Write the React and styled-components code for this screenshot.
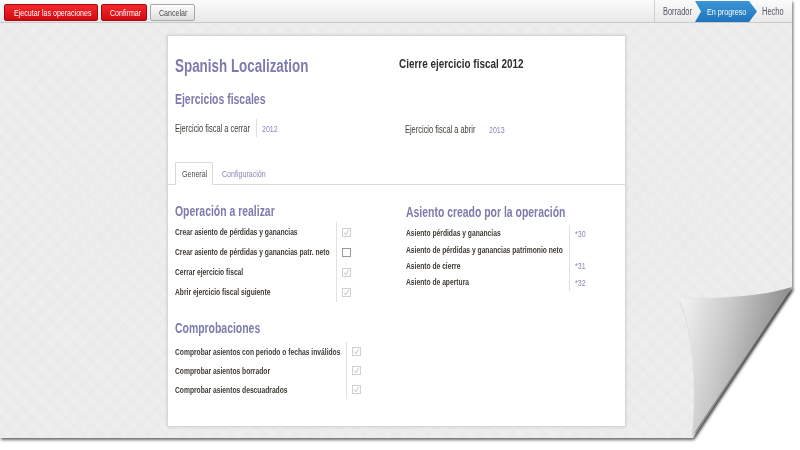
import React from "react";
import styled, { createGlobalStyle } from "styled-components";

const sans = `"Liberation Sans", Arial, sans-serif`;

const GlobalStyle = createGlobalStyle`
  html, body {
    margin: 0;
    padding: 0;
    background: #ffffff;
    font-family: ${sans};
  }
`;

// the screenshot is squeezed horizontally, so every text run is too
const Squeeze = styled.span`
  display: inline-block;
  white-space: nowrap;
  transform: scaleX(0.745);
  transform-origin: 0 50%;
`;

const CheckBox = ({ checked }) => (
  <Box $checked={checked}>
    {checked && (
      <svg width="7" height="7" viewBox="0 0 7 7">
        <path d="M1.2 3.4 L2.9 5.8 L5.9 0.6" fill="none" stroke="#b8b8b8" strokeWidth="0.8" />
      </svg>
    )}
  </Box>
);

const operaciones = [
  ["Crear asiento de pérdidas y ganancias", true],
  ["Crear asiento de pérdidas y ganancias patr. neto", false],
  ["Cerrar ejercicio fiscal", true],
  ["Abrir ejercicio fiscal siguiente", true],
];

const comprobaciones = [
  "Comprobar asientos con periodo o fechas inválidos",
  "Comprobar asientos borrador",
  "Comprobar asientos descuadrados",
];

const asientos = [
  ["Asiento pérdidas y ganancias", "*30"],
  ["Asiento de pérdidas y ganancias patrimonio neto", ""],
  ["Asiento de cierre", "*31"],
  ["Asiento de apertura", "*32"],
];

const App = () => {
  return (
    <Stage>
      <GlobalStyle />
      <PaperShadow>
        <Paper>
          <TopBar>
            <Buttons>
              <RedButton $w={94} $pad={9}>
                <Squeeze>Ejecutar las operaciones</Squeeze>
              </RedButton>
              <RedButton $w={46} $pad={8}>
                <Squeeze>Confirmar</Squeeze>
              </RedButton>
              <GrayButton $w={45} $pad={8}>
                <Squeeze>Cancelar</Squeeze>
              </GrayButton>
            </Buttons>
            <StatusBar>
              <Step $w={40} $pad={8}>
                <Squeeze>Borrador</Squeeze>
              </Step>
              <ActiveStep>
                <Squeeze>En progreso</Squeeze>
              </ActiveStep>
              <Step $w={35} $pad={5}>
                <Squeeze>Hecho</Squeeze>
              </Step>
            </StatusBar>
          </TopBar>

          <SheetArea>
            <Sheet>
              <Header>
                <Title>
                  <Squeeze>Spanish Localization</Squeeze>
                </Title>
                <Subtitle>
                  <Squeeze>Cierre ejercicio fiscal 2012</Squeeze>
                </Subtitle>
                <Heading>
                  <Squeeze>Ejercicios fiscales</Squeeze>
                </Heading>
                <span />
                <Field>
                  <FieldLabel $w={81} $line>
                    <Squeeze>Ejercicio fiscal a cerrar</Squeeze>
                  </FieldLabel>
                  <Value>
                    <Squeeze>2012</Squeeze>
                  </Value>
                </Field>
                <Field $right>
                  <FieldLabel $w={78}>
                    <Squeeze>Ejercicio fiscal a abrir</Squeeze>
                  </FieldLabel>
                  <Value>
                    <Squeeze>2013</Squeeze>
                  </Value>
                </Field>
              </Header>

              <Tabs>
                <Tab $active $w={38}>
                  <Squeeze>General</Squeeze>
                </Tab>
                <Tab $w={56}>
                  <Squeeze>Configuración</Squeeze>
                </Tab>
              </Tabs>

              <Body>
                <Column>
                  <Heading $top={18}>
                    <Squeeze>Operación a realizar</Squeeze>
                  </Heading>
                  <Group $label={161} $top={3} $row={20}>
                    {operaciones.map(([label, checked]) => (
                      <React.Fragment key={label}>
                        <Label>
                          <Squeeze>{label}</Squeeze>
                        </Label>
                        <Cell>
                          <CheckBox checked={checked} />
                        </Cell>
                      </React.Fragment>
                    ))}
                  </Group>

                  <Heading $top={18}>
                    <Squeeze>Comprobaciones</Squeeze>
                  </Heading>
                  <Group $label={171} $top={6} $row={19}>
                    {comprobaciones.map((label) => (
                      <React.Fragment key={label}>
                        <Label>
                          <Squeeze>{label}</Squeeze>
                        </Label>
                        <Cell>
                          <CheckBox checked />
                        </Cell>
                      </React.Fragment>
                    ))}
                  </Group>
                </Column>

                <Column>
                  <Heading $top={19}>
                    <Squeeze>Asiento creado por la operación</Squeeze>
                  </Heading>
                  <Group $label={163} $top={5} $row={16.4}>
                    {asientos.map(([label, value]) => (
                      <React.Fragment key={label}>
                        <Label>
                          <Squeeze>{label}</Squeeze>
                        </Label>
                        <Cell>
                          <Value $flush>
                            <Squeeze>{value}</Squeeze>
                          </Value>
                        </Cell>
                      </React.Fragment>
                    ))}
                  </Group>
                </Column>
              </Body>
            </Sheet>
          </SheetArea>
        </Paper>
      </PaperShadow>

      <Curl width="130" height="170" viewBox="0 0 130 170">
        <defs>
          <linearGradient id="curlFill" x1="0" y1="0.25" x2="1" y2="0.55">
            <stop offset="0" stopColor="#f0f0f0" />
            <stop offset="0.4" stopColor="#c8c8c8" />
            <stop offset="1" stopColor="#7a7a7a" />
          </linearGradient>
        </defs>
        <path
          d="M9 18 Q80 20 122 7 L22 156 C27 110 24 50 9 18 Z"
          fill="url(#curlFill)"
        />
      </Curl>
    </Stage>
  );
};

export default App;

const Stage = styled.div`
  position: relative;
  width: 800px;
  height: 450px;
  overflow: hidden;
  background: #ffffff;
`;

const PaperShadow = styled.div`
  width: 792px;
  height: 438px;
  filter: drop-shadow(1px 2px 1.5px rgba(0, 0, 0, 0.6));
`;

const Paper = styled.div`
  width: 792px;
  height: 438px;
  display: flex;
  flex-direction: column;
  background-color: #f1f1f1;
  background-image: repeating-linear-gradient(
      45deg,
      rgba(0, 0, 0, 0.025) 0 1px,
      transparent 1px 2px
    ),
    repeating-linear-gradient(
      -45deg,
      rgba(0, 0, 0, 0.02) 0 1px,
      transparent 1px 2px
    );
  clip-path: polygon(0 0, 792px 0, 792px 288px, 693px 438px, 0 438px);
`;

const TopBar = styled.div`
  height: 22px;
  flex: none;
  display: flex;
  align-items: stretch;
  background: linear-gradient(#fbfbfb, #e9e9e9);
  border-bottom: 1px solid #c9c9c9;
`;

const Buttons = styled.div`
  display: flex;
  gap: 3px;
  padding: 4px 0 0 4px;
`;

const ButtonBase = styled.div`
  width: ${(p) => p.$w}px;
  height: 17px;
  box-sizing: border-box;
  padding-left: ${(p) => p.$pad}px;
  display: flex;
  align-items: center;
  overflow: hidden;
  font-size: 9.5px;
  border-radius: 2px;
`;

const RedButton = styled(ButtonBase)`
  color: #ffffff;
  background: linear-gradient(#f5272d, #d20b10);
  border: 1px solid #a5090c;
`;

const GrayButton = styled(ButtonBase)`
  color: #4a4a4a;
  background: linear-gradient(#fdfdfd, #dedede);
  border: 1px solid #a9a9a9;
`;

const StatusBar = styled.div`
  margin-left: auto;
  display: flex;
  align-items: stretch;
  border-left: 1px solid #cfcfcf;
`;

const Step = styled.div`
  width: ${(p) => p.$w}px;
  box-sizing: border-box;
  padding-left: ${(p) => p.$pad}px;
  display: flex;
  align-items: center;
  overflow: hidden;
  font-size: 10px;
  color: #555566;
`;

const ActiveStep = styled.div`
  width: 62px;
  box-sizing: border-box;
  padding-left: 12px;
  margin-top: 1px;
  display: flex;
  align-items: center;
  overflow: hidden;
  font-size: 9.7px;
  color: #ffffff;
  background: linear-gradient(#3c96d8, #1f74bd);
  clip-path: polygon(0 0, 54px 0, 62px 50%, 54px 100%, 0 100%, 6px 50%);
`;

const SheetArea = styled.div`
  flex: 1;
  display: flex;
  justify-content: center;
  padding-top: 12px;
`;

const Sheet = styled.div`
  width: 459px;
  height: 392px;
  box-sizing: border-box;
  background: #ffffff;
  border: 1px solid #d6d6d6;
  box-shadow: 0 0 3px rgba(0, 0, 0, 0.12);
`;

const Header = styled.div`
  display: grid;
  grid-template-columns: 224px 1fr;
  align-items: start;
  padding: 20px 8px 0 7px;
`;

const Title = styled.div`
  font-size: 18px;
  line-height: 20px;
  font-weight: bold;
  color: #7c7bad;
`;

const Subtitle = styled.div`
  font-size: 13.3px;
  line-height: 16px;
  font-weight: bold;
  color: #2f2f2f;
`;

const Heading = styled.div`
  margin-top: ${(p) => p.$top ?? 15}px;
  font-size: 14px;
  line-height: 16px;
  font-weight: bold;
  color: #7c7bad;
`;

const Field = styled.div`
  height: 18px;
  display: flex;
  align-items: stretch;
  padding-left: ${(p) => (p.$right ? 6 : 0)}px;
  margin-top: ${(p) => (p.$right ? 13 : 12)}px;
`;

const FieldLabel = styled.div`
  width: ${(p) => p.$w}px;
  display: flex;
  align-items: center;
  overflow: hidden;
  font-size: 10px;
  color: #3f3a34;
  border-right: 1px solid ${(p) => (p.$line ? "#dedede" : "transparent")};
`;

const Value = styled.div`
  display: flex;
  align-items: center;
  padding-left: ${(p) => (p.$flush ? 0 : 5)}px;
  font-size: 9.5px;
  color: #8a89b6;
`;

const Tabs = styled.div`
  margin-top: 23px;
  height: 23px;
  display: flex;
  align-items: flex-end;
  padding-left: 7px;
  border-bottom: 1px solid #d9d9d9;
`;

const Tab = styled.div`
  width: ${(p) => p.$w}px;
  height: 23px;
  box-sizing: border-box;
  padding-left: 6px;
  margin-right: 2px;
  margin-bottom: -1px;
  display: flex;
  align-items: center;
  overflow: hidden;
  font-size: 9.5px;
  color: ${(p) => (p.$active ? "#4a4a4a" : "#8685b0")};
  background: ${(p) => (p.$active ? "#ffffff" : "transparent")};
  border: 1px solid ${(p) => (p.$active ? "#d9d9d9" : "transparent")};
  border-bottom-color: ${(p) => (p.$active ? "#ffffff" : "transparent")};
`;

const Body = styled.div`
  display: grid;
  grid-template-columns: 231px 1fr;
  padding: 0 8px 0 7px;
`;

const Column = styled.div`
  display: flex;
  flex-direction: column;
`;

const Group = styled.div`
  margin-top: ${(p) => p.$top}px;
  display: grid;
  grid-template-columns: ${(p) => p.$label}px 1fr;
  grid-auto-rows: ${(p) => p.$row}px;
`;

const Label = styled.div`
  display: flex;
  align-items: center;
  overflow: visible;
  font-size: 9px;
  font-weight: bold;
  color: #3f3a34;
`;

const Cell = styled.div`
  display: flex;
  align-items: center;
  padding-left: 5px;
  border-left: 1px solid #e2e2e2;
`;

const Box = styled.span`
  width: 9px;
  height: 9px;
  box-sizing: border-box;
  display: flex;
  align-items: center;
  justify-content: center;
  background: #ffffff;
  border: 1px solid ${(p) => (p.$checked ? "#d0d0d0" : "#9a9a9a")};
`;

const Curl = styled.svg`
  position: absolute;
  left: 670px;
  top: 280px;
  filter: drop-shadow(2px 2px 1.5px rgba(0, 0, 0, 0.45));
`;
